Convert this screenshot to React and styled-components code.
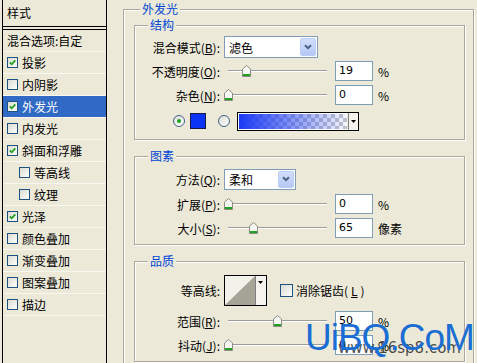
import React from 'react';
import styled, { createGlobalStyle } from 'styled-components';

const GlobalStyle = createGlobalStyle`
  html, body {
    margin: 0;
    padding: 0;
    background: #ece9d8;
    overflow: hidden;
  }
  body {
    font-family: "Noto Sans CJK SC", "DejaVu Sans", sans-serif;
    font-size: 12px;
    color: #000;
  }
`;

const Window = styled.div`
  position: relative;
  display: flex;
  width: 477px;
  height: 363px;
  overflow: hidden;
  background: #ece9d8;
`;

/* left: list of layer styles */
const StylePanel = styled.div`
  flex: none;
  width: 103px;
  margin-left: 2px;
  border-left: 1px solid #000;
  border-right: 1px solid #000;
`;

const PanelHeader = styled.div`
  height: 26px;
  line-height: 26px;
  padding-left: 4px;
  border-bottom: 4px double #000;
`;

const StyleItem = styled.div`
  display: flex;
  align-items: center;
  gap: 4px;
  height: 21px;
  padding-left: ${(p) => (p.$indent ? 16 : 4)}px;
  border-bottom: 1px solid #f8f7f0;
  background: ${(p) => (p.$selected ? '#316ac5' : 'transparent')};
  color: ${(p) => (p.$selected ? '#fff' : '#000')};
  white-space: nowrap;
`;

const CheckBox = styled.span`
  flex: none;
  display: inline-flex;
  align-items: center;
  justify-content: center;
  box-sizing: border-box;
  width: ${(p) => p.$size || 11}px;
  height: ${(p) => p.$size || 11}px;
  border: 1px solid #1c5180;
  background: linear-gradient(135deg, #dcdcd4, #fdfdfb);
`;

const Check = ({ on, size }) => (
  <CheckBox $size={size}>
    {on && (
      <svg width="7" height="7" viewBox="0 0 7 7">
        <polyline points="0.8,3.4 2.7,5.3 6.3,1.3" fill="none" stroke="#21a121" strokeWidth="1.8" />
      </svg>
    )}
  </CheckBox>
);

/* right: settings */
const Main = styled.div`
  flex: 1;
  padding: 1px 3px 0 16px;
`;

const Group = styled.fieldset`
  margin: ${(p) => (p.$first ? 0 : 8)}px 0 0;
  padding: ${(p) => (p.$outer ? '0 8px 12px 10px' : '2px 0 4px 0')};
  min-inline-size: 0;
  border: 1px solid #aca899;
  box-shadow: inset 1px 1px 0 #fff, 1px 1px 0 #fff;
`;

const Legend = styled.legend`
  margin-left: ${(p) => p.$offset}px;
  padding: 0 2px;
  line-height: 16px;
  color: #0046d5;
  background: #ece9d8;
`;

const FieldRow = styled.div`
  display: grid;
  grid-template-columns: 85px auto;
  column-gap: 4px;
  align-items: center;
  height: ${(p) => p.$h || 24}px;
`;

const FieldLabel = styled.label`
  text-align: right;
  white-space: nowrap;
`;

const Controls = styled.div`
  display: flex;
  align-items: center;
`;

const SelectBox = styled.div`
  display: flex;
  align-items: center;
  box-sizing: border-box;
  width: ${(p) => p.$w}px;
  height: ${(p) => p.$h}px;
  padding: 1px 1px 1px 4px;
  border: 1px solid #7f9db9;
  background: #fff;
`;

const SelectButton = styled.span`
  display: flex;
  align-items: center;
  justify-content: center;
  box-sizing: border-box;
  margin-left: auto;
  width: 16px;
  height: 100%;
  border: 1px solid #bacdf6;
  border-radius: 2px;
  background: linear-gradient(#d3defb, #b5c8f5);
`;

const Select = ({ value, w, h }) => (
  <SelectBox $w={w} $h={h}>
    {value}
    <SelectButton>
      <svg width="8" height="6" viewBox="0 0 8 6">
        <polyline points="1,1.2 4,4.2 7,1.2" fill="none" stroke="#4d6185" strokeWidth="2" />
      </svg>
    </SelectButton>
  </SelectBox>
);

const SliderWrap = styled.div`
  position: relative;
  flex: none;
  width: 111px;
  height: 14px;
`;

const Track = styled.div`
  position: absolute;
  left: 4px;
  top: 6px;
  width: 99px;
  height: 0;
  border-top: 1px solid #9d9c99;
  border-bottom: 1px solid #fff;
`;

const Thumb = styled.svg`
  position: absolute;
  top: 1px;
`;

const Slider = ({ value, max }) => (
  <SliderWrap>
    <Track />
    <Thumb width="9" height="12" viewBox="0 0 9 12" style={{ left: 4 + (value / max) * 99 - 4.5 }}>
      <path d="M0.5 4 L4.5 0.5 L8.5 4 V11.5 H0.5 Z" fill="#f6f6f2" stroke="#8c8c84" />
      <rect x="1" y="9" width="7" height="2" fill="#21a121" />
    </Thumb>
  </SliderWrap>
);

const NumberInput = styled.div`
  box-sizing: border-box;
  width: 38px;
  height: 20px;
  padding-left: 3px;
  border: 1px solid #7f9db9;
  background: #fff;
  font-family: "DejaVu Sans", sans-serif;
  font-size: 11px;
  line-height: 18px;
`;

const Unit = styled.span`
  margin-left: 5px;
`;

const SliderField = ({ label, value, max = 100, unit = '%' }) => (
  <FieldRow>
    <FieldLabel>{label}</FieldLabel>
    <Controls>
      <Slider value={value} max={max} />
      <NumberInput>{value}</NumberInput>
      <Unit>{unit}</Unit>
    </Controls>
  </FieldRow>
);

const ColorRow = styled.div`
  display: flex;
  align-items: center;
  height: 28px;
  padding-left: 38px;
`;

const Radio = styled.span`
  flex: none;
  display: inline-flex;
  align-items: center;
  justify-content: center;
  box-sizing: border-box;
  width: 12px;
  height: 12px;
  border: 1px solid #44608c;
  border-radius: 50%;
  background: linear-gradient(135deg, #dcdcd4, #fff);
  &::after {
    content: '';
    display: ${(p) => (p.$on ? 'block' : 'none')};
    width: 4px;
    height: 4px;
    border-radius: 50%;
    background: #21a121;
  }
`;

const Swatch = styled.span`
  box-sizing: border-box;
  width: 16px;
  height: 16px;
  margin: 0 12px 0 5px;
  border: 1px solid #1a1a40;
  background: #0b33f5;
`;

const GradientBox = styled.div`
  display: flex;
  box-sizing: border-box;
  width: 122px;
  height: 19px;
  margin-left: 7px;
  border: 1px solid #000;
  box-shadow: inset 0 0 0 1px #fff;
`;

const GradientFill = styled.span`
  flex: 1;
  margin: 1px;
  background:
    linear-gradient(to right, #1a3af5, rgba(40, 70, 245, 0.05)),
    repeating-conic-gradient(#c8c8c8 0 25%, #fff 0 50%) 0 0 / 8px 8px;
`;

const DropArrow = styled.span`
  display: flex;
  justify-content: center;
  align-items: ${(p) => (p.$top ? 'flex-start' : 'center')};
  padding-top: ${(p) => (p.$top ? 5 : 0)}px;
  box-sizing: border-box;
  width: 10px;
  border-left: 1px solid #808080;
  background: #f4f3ee;
`;

const Arrow = () => (
  <svg width="5" height="3" viewBox="0 0 5 3">
    <polygon points="0,0 5,0 2.5,3" fill="#000" />
  </svg>
);

const ContourBox = styled.div`
  display: flex;
  box-sizing: border-box;
  width: 43px;
  height: 31px;
  border: 1px solid #000;
  background: #f2f1ea;
`;

const ContourPreview = styled.svg`
  flex: none;
`;

const AntiAlias = styled.label`
  display: flex;
  align-items: center;
  gap: 3px;
  margin-left: 13px;
`;

const Watermark = styled.div`
  position: absolute;
  left: 305px;
  top: 318px;
  font-family: "Liberation Sans", Arial, sans-serif;
  font-size: 37px;
  letter-spacing: -1px;
  color: #1a6dd3;
  line-height: 40px;
`;

const WatermarkSub = styled.div`
  position: absolute;
  left: 338px;
  top: 339px;
  font-family: "DejaVu Sans", sans-serif;
  font-size: 15px;
  color: rgba(15, 15, 15, 0.75);
`;

const styles = [
  { name: '投影', on: true },
  { name: '内阴影' },
  { name: '外发光', on: true, selected: true },
  { name: '内发光' },
  { name: '斜面和浮雕', on: true },
  { name: '等高线', indent: true },
  { name: '纹理', indent: true },
  { name: '光泽', on: true },
  { name: '颜色叠加' },
  { name: '渐变叠加' },
  { name: '图案叠加' },
  { name: '描边' },
];

export default function App() {
  return (
    <Window>
      <GlobalStyle />
      <StylePanel>
        <PanelHeader>样式</PanelHeader>
        <StyleItem>混合选项:自定</StyleItem>
        {styles.map((s) => (
          <StyleItem key={s.name} $indent={s.indent} $selected={s.selected}>
            <Check on={s.on} />
            {s.name}
          </StyleItem>
        ))}
      </StylePanel>

      <Main>
        <Group $outer $first>
          <Legend $offset={6}>外发光</Legend>

          <Group $first>
            <Legend $offset={13}>结构</Legend>
            <FieldRow>
              <FieldLabel>混合模式(<u>B</u>):</FieldLabel>
              <Select value="滤色" w={94} h={22} />
            </FieldRow>
            <SliderField label={<>不透明度(<u>O</u>):</>} value={19} />
            <SliderField label={<>杂色(<u>N</u>):</>} value={0} />
            <ColorRow>
              <Radio $on />
              <Swatch />
              <Radio />
              <GradientBox>
                <GradientFill />
                <DropArrow><Arrow /></DropArrow>
              </GradientBox>
            </ColorRow>
          </Group>

          <Group>
            <Legend $offset={13}>图素</Legend>
            <FieldRow $h={26}>
              <FieldLabel>方法(<u>Q</u>):</FieldLabel>
              <Select value="柔和" w={72} h={21} />
            </FieldRow>
            <SliderField label={<>扩展(<u>P</u>):</>} value={0} />
            <SliderField label={<>大小(<u>S</u>):</>} value={65} max={250} unit="像素" />
          </Group>

          <Group>
            <Legend $offset={13}>品质</Legend>
            <FieldRow $h={38}>
              <FieldLabel>等高线:</FieldLabel>
              <Controls>
                <ContourBox>
                  <ContourPreview width="30" height="29" viewBox="0 0 30 29">
                    <polygon points="0,29 30,0 30,29" fill="#a6a496" />
                  </ContourPreview>
                  <DropArrow $top><Arrow /></DropArrow>
                </ContourBox>
                <AntiAlias>
                  <Check size={13} />
                  消除锯齿(<u>L</u>)
                </AntiAlias>
              </Controls>
            </FieldRow>
            <SliderField label={<>范围(<u>R</u>):</>} value={50} />
            <SliderField label={<>抖动(<u>J</u>):</>} value={0} />
          </Group>
        </Group>
      </Main>

      <WatermarkSub>www.16sp8.com</WatermarkSub>
      <Watermark>UiBQ.CoM</Watermark>
    </Window>
  );
}
